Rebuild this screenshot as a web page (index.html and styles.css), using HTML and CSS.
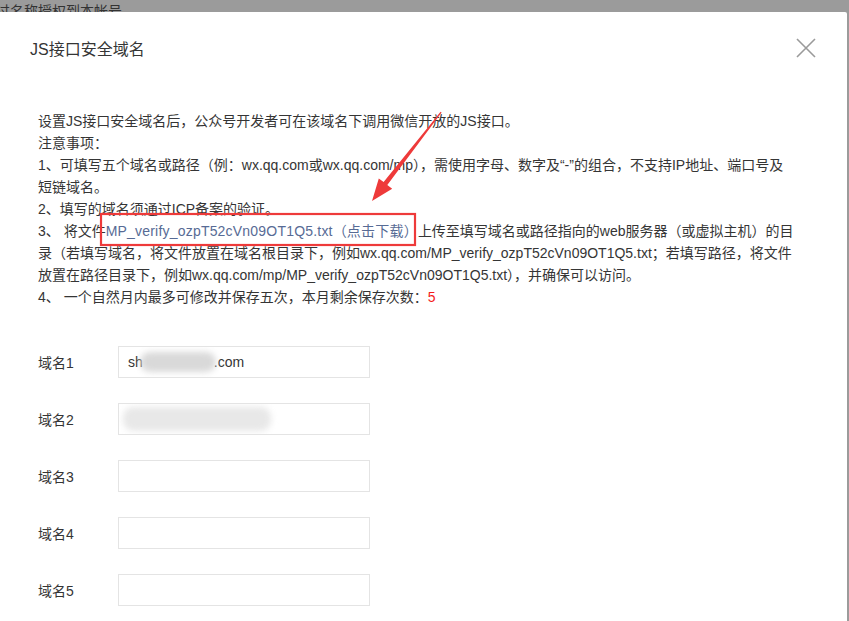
FILE: index.html
```html
<!DOCTYPE html>
<html lang="zh-CN">
<head>
<meta charset="utf-8">
<title>JS接口安全域名</title>
<link rel="stylesheet" href="styles.css">
</head>
<body>
<div class="backdrop-strip"><span class="backdrop-text">过名称授权到本帐号</span></div>
<div class="dialog">
  <div class="dialog-header">
    <h3 class="dialog-title">JS接口安全域名</h3>
    <button class="close-btn" aria-label="关闭">
      <svg width="20" height="20" viewBox="0 0 20 20"><path d="M1 1 L19 19 M19 1 L1 19" stroke="#9a9a9a" stroke-width="1.6" fill="none"/></svg>
    </button>
  </div>
  <div class="dialog-body">
    <div class="notice">
      <p>设置JS接口安全域名后，公众号开发者可在该域名下调用微信开放的JS接口。</p>
      <p>注意事项：</p>
      <p>1、可填写五个域名或路径（例：wx.qq.com或wx.qq.com/mp），需使用字母、数字及“-”的组合，不支持IP地址、端口号及短链域名。</p>
      <p>2、填写的域名须通过ICP备案的验证。</p>
      <p>3、 将文件<a class="link" href="#">MP_verify_ozpT52cVn09OT1Q5.txt（点击下载）</a>上传至填写域名或路径指向的web服务器（或虚拟主机）的目录（若填写域名，将文件放置在域名根目录下，例如wx.qq.com/MP_verify_ozpT52cVn09OT1Q5.txt；若填写路径，将文件放置在路径目录下，例如wx.qq.com/mp/MP_verify_ozpT52cVn09OT1Q5.txt），并确保可以访问。</p>
      <p>4、 一个自然月内最多可修改并保存五次，本月剩余保存次数：<span class="count">5</span></p>
    </div>
    <div class="form">
      <div class="form-row"><label class="form-label">域名1</label><div class="input">sh<span class="blur blur-1"></span>.com</div></div>
      <div class="form-row"><label class="form-label">域名2</label><div class="input"><span class="blur blur-2"></span></div></div>
      <div class="form-row"><label class="form-label">域名3</label><div class="input"></div></div>
      <div class="form-row"><label class="form-label">域名4</label><div class="input"></div></div>
      <div class="form-row"><label class="form-label">域名5</label><div class="input"></div></div>
    </div>
  </div>
  <svg class="annotation" width="847" height="609" viewBox="0 12 847 609">
    <rect x="101" y="214" width="314" height="31" fill="none" stroke="#ee3a3a" stroke-width="2.2"/>
    <polygon points="440.6,111.7 441.6,112.5 387.3,185.0 392.2,188.8 372,201 378.8,178.4 383.6,182.1" fill="#ee3a3a"/>
  </svg>
</div>
</body>
</html>
```

FILE: styles.css
```css
* { box-sizing: border-box; }
html, body { margin: 0; padding: 0; }
body {
  width: 849px;
  height: 621px;
  overflow: hidden;
  background: #9b9b9b;
  font-family: "Liberation Sans", "Noto Sans CJK SC", sans-serif;
  color: #353535;
}
.backdrop-strip {
  height: 12px;
  overflow: hidden;
  position: relative;
}
.backdrop-text {
  display: block;
  margin-left: -4px;
  font-size: 14px;
  line-height: 14px;
  margin-top: 4px;
  color: #333;
}
.dialog {
  position: relative;
  width: 847px;
  height: 609px;
  background: #fff;
  border-top-right-radius: 2px;
}
.dialog-header {
  height: 72px;
  display: flex;
  align-items: center;
  justify-content: space-between;
  padding: 0 31px 0 30px;
}
.dialog-title {
  margin: 0;
  font-size: 16px;
  font-weight: normal;
  color: #353535;
}
.close-btn {
  border: 0;
  background: none;
  padding: 0;
  width: 20px;
  height: 20px;
  display: flex;
  cursor: pointer;
}
.dialog-body {
  padding: 26px 52px 0 38px;
}
.notice {
  font-size: 14px;
  line-height: 22px;
}
.notice p { margin: 0; }
.link {
  color: #576b95;
  text-decoration: none;
  letter-spacing: 0.2px;
}
.count { color: #f41c1c; }
.form {
  margin-top: 38px;
  display: flex;
  flex-direction: column;
  gap: 25px;
}
.form-row {
  display: flex;
  align-items: center;
  height: 32px;
}
.form-label {
  width: 80px;
  font-size: 14px;
}
.input {
  width: 252px;
  height: 32px;
  border: 1px solid #e4e4e4;
  padding: 0 9px;
  font-size: 14px;
  line-height: 30px;
  color: #353535;
  white-space: nowrap;
  overflow: hidden;
}
.blur {
  display: inline-block;
  vertical-align: middle;
  background: #d9d9d9;
  filter: blur(3px);
  border-radius: 10px;
}
.blur-1 {
  width: 76px;
  height: 20px;
  margin: -3px -2px 0 -3px;
}
.blur-2 {
  width: 148px;
  height: 24px;
  margin: -2px 0 0 -5px;
  background: #e8e8e8;
}
.annotation {
  position: absolute;
  left: 0;
  top: 0;
  pointer-events: none;
}
```
